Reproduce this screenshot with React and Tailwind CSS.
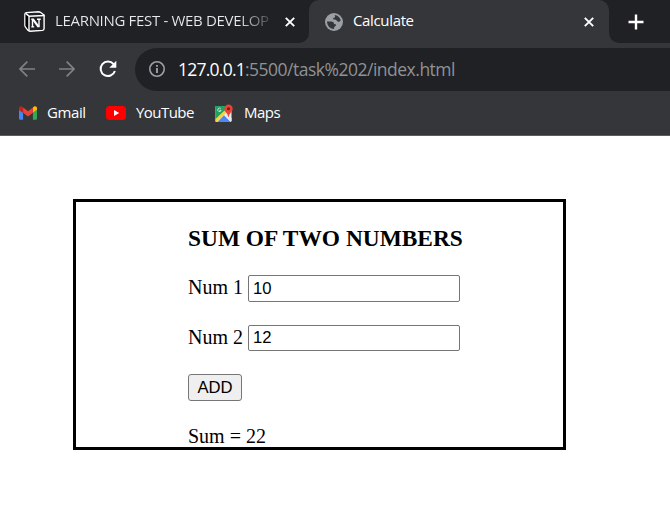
import React from "react";

function NotionIcon() {
  return (
    <svg className="block h-[21px] w-[21px]" viewBox="0 0 21 21">
      <path d="M2.200 1.600 14.600.8c.8 0 1.200.1 1.800.5l2.600 2c.8.6 1.100 1 1.100 1.800v12.400c0 1.200-.5 1.800-1.600 1.900L6 20.200c-1 0-1.400-.2-2-.9L1.600 16.200C1.100 15.500.9 15 .9 14.200V3.200c0-1 .5-1.500 1.300-1.600Z" fill="#202124" stroke="#fff" strokeWidth="1.400" />
      <path d="M1.600 2.800 4.600 5.300V19L1.600 15Z" fill="#000" />
      <path d="M5 5.300 20 4.500V3.600M1.600 2.400 5 5.200V19.700" fill="none" stroke="#fff" strokeWidth="1.400" />
      <path d="M7.300 8.300h2.600M8.500 8.500v7.300M7.300 15.900h2.900M13 8.200h3.700M15 8.400v7.800" fill="none" stroke="#fff" strokeWidth="1.400" />
      <path d="m9 8.300 5.600 7.600" stroke="#fff" strokeWidth="2.200" />
    </svg>
  );
}

function GlobeIcon() {
  return (
    <svg className="block h-[18px] w-[18px]" viewBox="0 0 18 18">
      <circle cx="9" cy="9" r="9" fill="#9aa0a6" />
      <path d="M9.800 2c2.800.4 5.200 2.500 5.900 5.200-.8 1.300-1.700 1.600-2.900 1.400-.9-.2-1-1.700-2.200-1.900-1.200-.1-2.600.2-2.500-1.100.1-1.100 1.700-.7 2-1.600.2-.7-.5-1.300-.3-2ZM2 8.500h4.300c1.500 0 2.300.7 2.600 1.900.2.800 1.500.5 2 1.100.5.700-.2 1.600-1 1.900-.8.400-.8 1.100-.8 2.600C5.200 16 2.100 13 2 8.500Z" fill="#35363a" />
    </svg>
  );
}

function CloseIcon() {
  return (
    <svg className="block h-[10px] w-[10px]" viewBox="0 0 10 10">
      <path d="m.8.800 8.400 8.400m0-8.400L.8 9.200" stroke="#fff" strokeWidth="1.900" />
    </svg>
  );
}

function ArrowIcon({ className }) {
  return (
    <svg className={"block h-4 w-4 " + className} viewBox="0 0 16 16">
      <path d="M16 8H1.200M8.300.7 1 8l7.300 7.300" fill="none" stroke="#808185" strokeWidth="1.700" />
    </svg>
  );
}

function ReloadIcon() {
  return (
    <svg className="block h-[18px] w-[18px]" viewBox="0 0 18 18">
      <path d="M14.600 4.100A7.300 7.300 0 1 0 15.900 11" fill="none" stroke="#fff" strokeWidth="2" />
      <path d="M17.300.8v7h-7Z" fill="#fff" />
    </svg>
  );
}

function InfoIcon() {
  return (
    <svg className="block h-4 w-4" viewBox="0 0 16 16">
      <circle cx="8" cy="8" r="7.200" fill="none" stroke="#9aa0a6" strokeWidth="1.600" />
      <path d="M8 7v5M8 4v1.800" stroke="#9aa0a6" strokeWidth="1.900" />
    </svg>
  );
}

function GmailIcon() {
  return (
    <svg className="block h-[14px] w-[18px]" viewBox="52 42 88 66">
      <path fill="#4285f4" d="M58 108h14V74L52 59v43c0 3.320 2.690 6 6 6" />
      <path fill="#34a853" d="M120 108h14c3.320 0 6-2.690 6-6V59l-20 15" />
      <path fill="#fbbc04" d="M120 48v26l20-15v-8c0-7.420-8.470-11.650-14.400-7.200" />
      <path fill="#ea4335" d="M72 74V48l24 18 24-18v26L96 92" />
      <path fill="#c5221f" d="M52 51v8l20 15V48l-5.600-4.200c-5.940-4.450-14.400-.22-14.400 7.200" />
    </svg>
  );
}

function YouTubeIcon() {
  return (
    <svg className="block h-[14px] w-5" viewBox="0 0 20 14">
      <rect width="20" height="14" rx="3.500" fill="#f00" />
      <path d="m8 4 5.200 3L8 10Z" fill="#fff" />
    </svg>
  );
}

function MapsIcon() {
  return (
    <svg className="block h-[19px] w-[18px]" viewBox="0 0 18 19">
      <path d="M1.500 2H12l4.500 5v9.500c0 .9-.6 1.500-1.500 1.500H1.500C.7 18 .5 17.500.5 17V3c0-.6.400-1 1-1Z" fill="#e8eaed" />
      <path d="M1.500 2H11v6L.5 16V3c0-.6.400-1 1-1Z" fill="#1ea362" />
      <path d="m.5 15 9-8.500 2 2L2 18H1.300c-.5 0-.8-.4-.8-1Z" fill="#fbd23e" />
      <path d="M2.500 18 9 11.300l6.500 6.700Z" fill="#4a89f3" />
      <path d="m9.500 10.800 2-1.800 5 5v3.500Z" fill="#e8eaed" />
      <path d="M5.700 4.700a1.700 1.700 0 1 0 .4 1.700H4.500" fill="none" stroke="#d5f1e1" strokeWidth=".9" />
      <path d="M13.500.5a4.200 4.200 0 0 0-4.200 4.200c0 3 3.500 4.200 3.800 8h.8c.3-3.800 3.800-5 3.800-8A4.200 4.200 0 0 0 13.500.5Z" fill="#ea4335" />
      <circle cx="13.500" cy="4.700" r="1.500" fill="#811411" />
    </svg>
  );
}

function Field({ label, value, inputClass }) {
  return (
    <label className="flex h-[50px] items-start">
      <span className="w-[60px] pt-px leading-[23px]">{label}</span>
      <input
        type="text"
        defaultValue={value}
        className={"w-[212px] rounded-[2px] border border-[#767676] bg-white px-1 py-0 font-['Liberation_Sans',Arial,sans-serif] text-[16.67px] leading-6 outline-none " + inputClass}
      />
    </label>
  );
}

export default function App() {
  return (
    <div className="h-[507px] w-[670px] overflow-hidden bg-white">
      <header className="h-[136px] border-b border-[#5b5c60] bg-[#35363a] font-['Open_Sans','Noto_Sans',sans-serif] text-white">
        <div className="flex h-[43px] bg-[#35363a]">
          <div className="flex w-[309px] items-center rounded-br-[10px] bg-[#202124] pl-6">
            <NotionIcon />
            <span className="ml-[10px] w-[216px] whitespace-nowrap bg-linear-to-r from-[#e8eaed] from-85% to-[#e8eaed]/15 bg-clip-text pb-[3px] text-[15px] leading-5 tracking-[-0.32px] text-transparent">
              LEARNING FEST - WEB DEVELOP
            </span>
            <span className="ml-[14px]"><CloseIcon /></span>
          </div>
          <div className="flex w-[300px] bg-[#202124]">
            <div className="flex w-full items-center rounded-t-[10px] bg-[#35363a] pl-4">
              <GlobeIcon />
              <span className="ml-[10px] w-[231px] pb-[3px] text-[15px] leading-5 tracking-[-0.35px]">Calculate</span>
              <CloseIcon />
            </div>
          </div>
          <div className="flex flex-1 items-center rounded-bl-[10px] bg-[#202124] pl-[19px]">
            <svg className="block h-4 w-4" viewBox="0 0 16 16">
              <path d="M8 .5v15M.5 8h15" stroke="#fff" strokeWidth="2.400" />
            </svg>
          </div>
        </div>
        <div className="flex h-[48px] pt-[5px]">
          <div className="flex w-[135px] items-center pb-[2px] pl-[19px]">
            <ArrowIcon className="" />
            <ArrowIcon className="ml-6 rotate-180" />
            <span className="ml-6"><ReloadIcon /></span>
          </div>
          <div className="flex flex-1 items-center rounded-l-full bg-[#202124] pb-px pl-[14px]">
            <InfoIcon />
            <div className="ml-[13px] flex pb-px whitespace-nowrap text-[17.500px] leading-6">
              <span className="w-[67px] tracking-[-0.75px]">127.0.0.1</span>
              <span className="tracking-[-0.5px] text-[#8f9296]">:5500/task%202/index.html</span>
            </div>
          </div>
        </div>
        <nav className="flex h-[44px] items-center pl-[19px] text-[15px] leading-5">
          <div className="flex w-[87px] items-center gap-[10px]">
            <GmailIcon />
            <span className="pb-[2px] tracking-[-0.4px]">Gmail</span>
          </div>
          <div className="flex w-[109px] items-center gap-[10px]">
            <YouTubeIcon />
            <span className="pb-[2px] tracking-[-0.55px]">YouTube</span>
          </div>
          <div className="flex items-center gap-[11px]">
            <MapsIcon />
            <span className="pb-[2px] tracking-[-0.5px]">Maps</span>
          </div>
        </nav>
      </header>
      <main className="pt-[63px] pl-[73px]">
        <div className="h-[251px] w-[493px] border-[3px] border-black pt-[23px] pl-[112px] font-['Liberation_Serif','Times_New_Roman',serif] text-[20px] text-black">
          <h3 className="h-[50px] whitespace-nowrap text-[23.400px] leading-[27px] font-bold">SUM OF TWO NUMBERS</h3>
          <Field label="Num 1" value="10" inputClass="h-[27px]" />
          <Field label="Num 2" value="12" inputClass="h-[26px]" />
          <button className="-mt-px block h-[27px] w-[54px] rounded-[3px] border border-[#767676] bg-[#efefef] font-['Liberation_Sans',Arial,sans-serif] text-[16.67px] leading-[25px]">
            ADD
          </button>
          <p className="mt-6 leading-[23px]">Sum = 22</p>
        </div>
      </main>
    </div>
  );
}
